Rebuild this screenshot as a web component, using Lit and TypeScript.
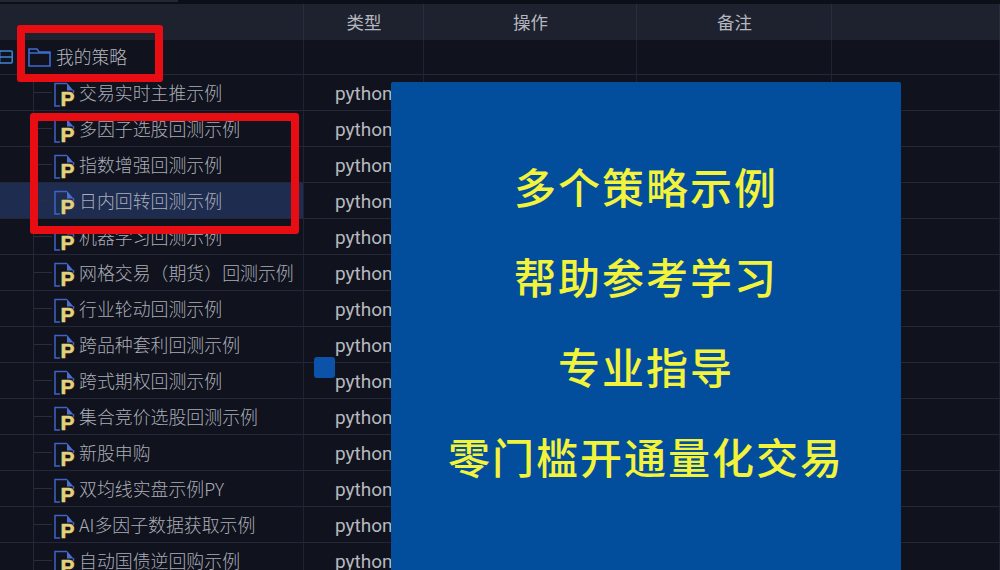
import { LitElement, html, css } from "lit";
import { customElement } from "lit/decorators.js";

const ROWS = [
  "交易实时主推示例",
  "多因子选股回测示例",
  "指数增强回测示例",
  "日内回转回测示例",
  "机器学习回测示例",
  "网格交易（期货）回测示例",
  "行业轮动回测示例",
  "跨品种套利回测示例",
  "跨式期权回测示例",
  "集合竞价选股回测示例",
  "新股申购",
  "双均线实盘示例PY",
  "AI多因子数据获取示例",
  "自动国债逆回购示例",
];
const PANEL = ["多个策略示例", "帮助参考学习", "专业指导", "零门槛开通量化交易"];

@customElement("app-root")
export class AppRoot extends LitElement {
  static styles = css`
    :host {
      display: block;
      position: relative;
      width: 1000px;
      height: 570px;
      overflow: hidden;
      background: #10121e;
      font-family: "Noto Sans CJK SC", "Liberation Sans", sans-serif;
      color: #a8abb3;
    }
    .topbar {
      height: 4px;
      background: #0c0e18;
    }
    .topbar i {
      display: block;
      width: 178px;
      height: 2px;
      background: #23252f;
    }
    .row {
      display: grid;
      grid-template-columns: 304px 120px 213px 195px 1fr;
      height: 36px;
      box-sizing: border-box;
      border-bottom: 1px solid #24273a;
    }
    .cell {
      border-right: 1px solid #1f2233;
      display: flex;
      align-items: center;
      min-width: 0;
    }
    .head {
      height: 36px;
      background: #1e212e;
      border-bottom: none;
    }
    .head .cell {
      justify-content: center;
      font-size: 17.5px;
      padding-bottom: 2px;
      padding-left: 1px;
      box-sizing: border-box;
      color: #b4b7bf;
      border-right-color: #2a2d3b;
    }
    .root-row {
      height: 35px;
    }
    .selected .tree {
      background: #1e2c50;
    }
    .toggle {
      width: 14px;
      height: 14px;
      margin-left: -1px;
      flex: none;
    }
    .folder {
      width: 23px;
      height: 20px;
      margin-left: 15px;
      flex: none;
    }
    .root-name {
      margin-left: 5px;
      padding-bottom: 2px;
      font-size: 17.8px;
      font-weight: 300;
      color: #b5b8be;
    }
    .tree {
      white-space: nowrap;
    }
    .guide {
      align-self: stretch;
      width: 1px;
      margin-left: 33px;
      background: #242738;
      flex: none;
    }
    .stub {
      width: 18px;
      height: 1px;
      background: #2a2d3e;
      flex: none;
    }
    .file {
      width: 24px;
      height: 30px;
      margin-left: 2px;
      flex: none;
      overflow: visible;
    }
    .name {
      margin-left: 1px;
      padding-bottom: 2px;
      font-size: 17.9px;
      font-weight: 300;
      color: #a9adb5;
    }
    .type {
      padding-left: 31px;
      padding-top: 2px;
      box-sizing: border-box;
      font-family: Roboto, "Liberation Sans", sans-serif;
      font-size: 19px;
      color: #b6b9be;
      overflow: hidden;
    }
    .panel {
      position: absolute;
      left: 391px;
      top: 82px;
      width: 510px;
      height: 500px;
      box-sizing: border-box;
      padding-top: 74px;
      background: #024d9c;
      border-radius: 2px;
      display: flex;
      flex-direction: column;
      align-items: center;
      gap: 30px;
    }
    .panel div {
      height: 60px;
      line-height: 60px;
      font-size: 42px;
      font-weight: 500;
      letter-spacing: 2px;
      color: #f2f33a;
    }
    .handle {
      position: absolute;
      left: 314px;
      top: 357px;
      width: 21px;
      height: 21px;
      border-radius: 3px;
      background: #0b52a8;
    }
    .mark {
      position: absolute;
      box-sizing: border-box;
      border: 8px solid #e70d12;
      border-radius: 3px;
    }
    .mark-a {
      left: 17px;
      top: 25px;
      width: 146px;
      height: 57px;
    }
    .mark-b {
      left: 30px;
      top: 113px;
      width: 269px;
      height: 121px;
    }
  `;

  private fileIcon() {
    return html`<svg class="file" viewBox="0 0 24 30">
      <path d="M6 28H1V5.5H13" fill="none" stroke="#3f63c4" stroke-width="1.5" />
      <path d="M13 5l6.5 7.5H13z" fill="#4a6fd0" />
      <path d="M19.5 12v3" stroke="#3f63c4" stroke-width="1.5" />
      <text x="6.6" y="28" font-family="Liberation Sans" font-weight="700" font-size="21" fill="#e3d27b" stroke="#e3d27b" stroke-width=".5">P</text>
    </svg>`;
  }

  render() {
    return html`
      <div class="topbar"><i></i></div>
      <div class="row head">
        <div class="cell"></div>
        <div class="cell">类型</div>
        <div class="cell">操作</div>
        <div class="cell">备注</div>
        <div class="cell"></div>
      </div>
      <div class="row root-row">
        <div class="cell tree">
          <svg class="toggle" viewBox="0 0 14 14" fill="none" stroke="#3f86d6" stroke-width="1.5">
            <rect x=".7" y="1" width="12.5" height="12" rx="1" />
            <path d="M1 7h12" />
          </svg>
          <svg class="folder" viewBox="0 0 23 20" fill="none" stroke="#3f6bd0" stroke-width="1.6">
            <path d="M1 2h8l2 3h11v14H1zM1 6h21" />
          </svg>
          <span class="root-name">我的策略</span>
        </div>
        <div class="cell"></div>
        <div class="cell"></div>
        <div class="cell"></div>
        <div class="cell"></div>
      </div>
      ${ROWS.map(
        (name, i) => html`<div class="row ${i === 3 ? "selected" : ""}">
          <div class="cell tree">
            <span class="guide"></span>
            <span class="stub"></span>
            ${this.fileIcon()}
            <span class="name">${name}</span>
          </div>
          <div class="cell type">python</div>
          <div class="cell"></div>
          <div class="cell"></div>
          <div class="cell"></div>
        </div>`
      )}
      <div class="handle"></div>
      <div class="panel">${PANEL.map((t) => html`<div>${t}</div>`)}</div>
      <div class="mark mark-a"></div>
      <div class="mark mark-b"></div>
    `;
  }
}
